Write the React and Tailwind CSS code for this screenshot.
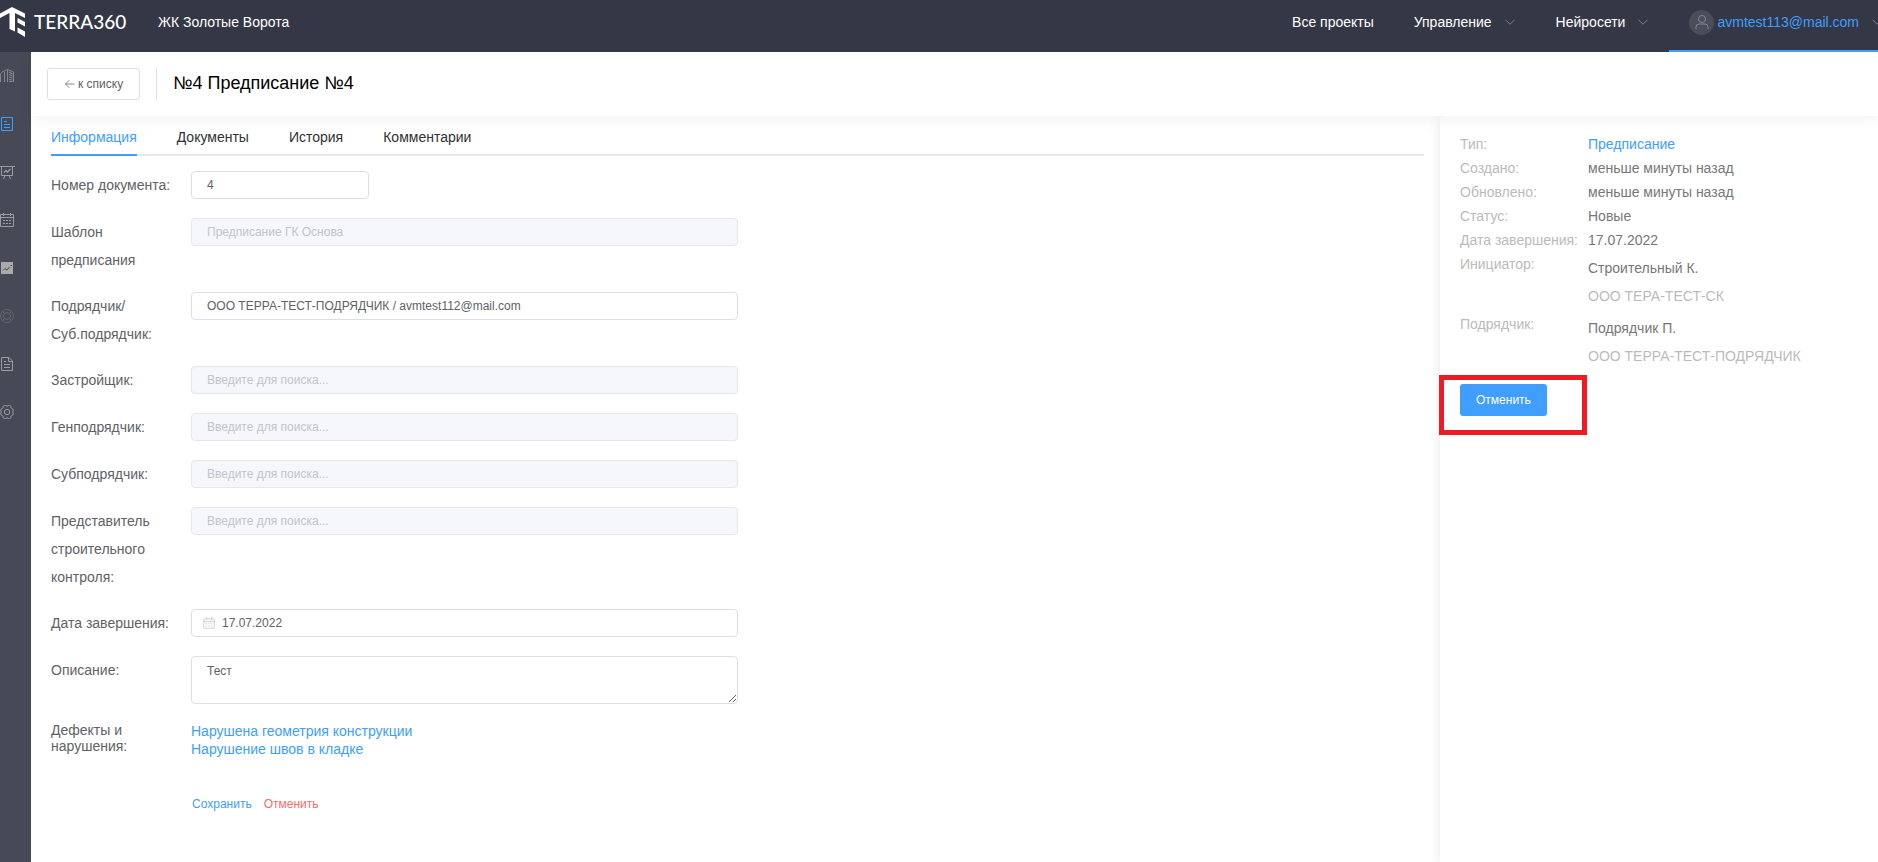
import clsx from "clsx";

const menu = [
  { title: "Объект", tone: "text-[#85878e]", Icon: BuildingIcon },
  { title: "Предписания", tone: "text-[#409eff]", Icon: TicketsIcon },
  { title: "Доска", tone: "text-[#9c9da2]", Icon: BoardIcon },
  { title: "Календарь", tone: "text-[#9c9da2]", Icon: DateIcon },
  { title: "Аналитика", tone: "text-[#aaaaaa]", Icon: MarketingIcon },
  { title: "Помощь", tone: "text-[#666872]", Icon: HelpIcon },
  { title: "Документы", tone: "text-[#9c9da2]", Icon: DocumentIcon },
  { title: "Настройки", tone: "text-[#9c9da2]", Icon: SettingIcon },
];

const tabs = ["Информация", "Документы", "История", "Комментарии"];

const details = [
  { label: "Тип:", value: "Предписание", link: true },
  { label: "Создано:", value: "меньше минуты назад" },
  { label: "Обновлено:", value: "меньше минуты назад" },
  { label: "Статус:", value: "Новые" },
  { label: "Дата завершения:", value: "17.07.2022" },
];

const people = [
  { label: "Инициатор:", name: "Строительный К.", company: "ООО ТЕРА-ТЕСТ-СК" },
  { label: "Подрядчик:", name: "Подрядчик П.", company: "ООО ТЕРРА-ТЕСТ-ПОДРЯДЧИК" },
];

function Svg({ className = "size-4", children }) {
  return (
    <svg className={className} viewBox="0 0 16 16" fill="none" stroke="currentColor" aria-hidden="true">
      {children}
    </svg>
  );
}

function BuildingIcon() {
  return (
    <Svg>
      <path d="M.5 14V5.500L2.500 4M4.500 14V4M2 4l5.500-2.500L13.500 4v10M7.500 1.500V14" />
      <path d="M9 4l3.500 2M9 6.500l3.500 1.500M9 9l3.500 1M9 11.500l3.500.5M9 13.500h3.500" strokeWidth="1.200" />
    </Svg>
  );
}

function TicketsIcon() {
  return (
    <Svg>
      <path d="M1.500 1.500h11v13h-11zM4 5.500h3M4 8.500h6M4 11.500h6" />
    </Svg>
  );
}

function BoardIcon() {
  return (
    <Svg>
      <path d="M0 2.500h15M1.500 2.500v9h11v-9M5 11.500L3.500 15M9 11.500l1.500 3.500" />
      <path d="M4 8.500l2-2L7.500 8l3-3" strokeWidth="1.300" />
    </Svg>
  );
}

function DateIcon() {
  return (
    <Svg>
      <path d="M.5 2.500h13v12H.5zM.5 5.500h13M3.500 1v3M10.500 1v3" />
      <path d="M3 8.500h9M3 11.500h9" strokeDasharray="2 1" />
    </Svg>
  );
}

function MarketingIcon() {
  return (
    <Svg>
      <path d="M1 2h12v12H1z" fill="currentColor" stroke="none" />
      <path d="M3 10.500l2-2L7 10l2.500-3M10.500 5.500h1.500" className="stroke-[#474a56]" />
    </Svg>
  );
}

function HelpIcon() {
  return (
    <Svg>
      <circle cx="7" cy="8" r="6.500" />
      <circle cx="7" cy="8" r="3.500" />
      <path d="M2.500 3.500l2 2M11.500 3.500l-2 2M2.500 12.500l2-2M11.500 12.500l-2-2" />
    </Svg>
  );
}

function DocumentIcon() {
  return (
    <Svg>
      <path d="M1.500 1.500H9L12.500 5v9.500h-11zM8.500 1.500v4h4M4 5.500h2M4 8.500h6M4 11.500h6" />
    </Svg>
  );
}

function SettingIcon() {
  return (
    <Svg>
      <path
        d="M4.500 1.500h1.200l1.300.8 1.300-.8h1.200l1.300.8.2 1.500 1.500.9.800 1.300-.6 2 .6 2-.8 1.300-1.500.9-.2 1.500-1.300.8H8.300L7 13.700l-1.300.8H4.500l-1.300-.8-.2-1.500-1.500-.9-.8-1.300.6-2-.6-2 .8-1.300L3 3.800l.2-1.500z"
        strokeLinejoin="round"
      />
      <circle cx="7" cy="8" r="2.700" />
    </Svg>
  );
}

function ChevronDown() {
  return (
    <Svg className="ml-3 size-3 shrink-0 text-[#909399]">
      <path d="M2 5l6 6 6-6" />
    </Svg>
  );
}

function Logo() {
  return (
    <a href="#" className="flex w-[127px] items-center gap-2 text-white">
      <svg className="h-[31px] w-[26px] shrink-0" viewBox="0 0 26 31" fill="currentColor" aria-hidden="true">
        <path d="M12 0l13 6.500V11L15 6v18.500L9.500 22V6L0 11V6.500z" />
        <path d="M17.500 11l7.500 4v4.500l-7.500-4zM17.500 20.500l7.500 4V30l-7.500-4.500z" />
      </svg>
      <span className="font-[Lato,sans-serif] text-[19px] leading-5 font-medium">TERRA360</span>
    </a>
  );
}

function Header() {
  return (
    <header className="relative z-20 flex h-[52px] overflow-hidden bg-[#343745] text-sm text-white">
      <div className="flex h-11 flex-1 items-center gap-[31px]">
        <Logo />
        <a href="#" className="whitespace-nowrap">ЖК Золотые Ворота</a>
      </div>
      <nav className="-mr-[25px] flex whitespace-nowrap">
        <a href="#" className="flex items-center px-5 pt-1 pb-3">Все проекты</a>
        <button className="flex items-center px-5 pt-1 pb-3">
          Управление
          <ChevronDown />
        </button>
        <button className="flex items-center px-5 pt-1 pb-3">
          Нейросети
          <ChevronDown />
        </button>
        <button className="flex items-center border-b-2 border-[#409eff] px-5 pt-1 pb-2.5 text-[#409eff]">
          <span className="mr-[3px] flex size-[25px] items-center justify-center rounded-full bg-[#4a4d5a] text-[#85878e]">
            <Svg>
              <circle cx="8" cy="5" r="3.500" />
              <path d="M2 15v-2a3 3 0 013-3h6a3 3 0 013 3v2" />
            </Svg>
          </span>
          avmtest113@mail.com
          <ChevronDown />
        </button>
      </nav>
    </header>
  );
}

function Sidebar() {
  return (
    <aside className="w-[31px] shrink-0 bg-[#474a56]">
      {menu.map(({ title, tone, Icon }) => (
        <a key={title} href="#" aria-label={title} className={clsx("flex h-12 items-center", tone)}>
          <Icon />
        </a>
      ))}
    </aside>
  );
}

function Row({ id, label, tight, children }) {
  return (
    <div className="flex min-h-[29px] items-start">
      <label htmlFor={id} className={clsx("w-[140px] shrink-0 pr-3", tight ? "leading-4" : "leading-7")}>
        {label}
      </label>
      <div className="min-w-0 flex-1">{children}</div>
    </div>
  );
}

function TextInput({ className = "w-full px-[15px]", ...props }) {
  return (
    <input
      className={clsx(
        "block h-7 rounded border border-[#dcdfe6] bg-white text-xs text-[#606266] outline-none placeholder:text-[#c0c4cc] disabled:border-[#e4e7ed] disabled:bg-[#f5f7fa] disabled:text-[#c0c4cc]",
        className
      )}
      {...props}
    />
  );
}

function InfoForm() {
  return (
    <form className="mt-[15px] flex w-1/2 flex-col gap-[18px] text-sm text-[#606266]">
      <Row id="number" label="Номер документа:">
        <TextInput id="number" defaultValue="4" className="w-[178px] px-[15px]" />
      </Row>
      <Row id="template" label="Шаблон предписания">
        <TextInput id="template" defaultValue="Предписание ГК Основа" disabled />
      </Row>
      <Row id="contractor" label="Подрядчик/ Суб.подрядчик:">
        <TextInput id="contractor" defaultValue="ООО ТЕРРА-ТЕСТ-ПОДРЯДЧИК / avmtest112@mail.com" />
      </Row>
      <Row id="developer" label="Застройщик:">
        <TextInput id="developer" placeholder="Введите для поиска..." disabled />
      </Row>
      <Row id="general" label="Генподрядчик:">
        <TextInput id="general" placeholder="Введите для поиска..." disabled />
      </Row>
      <Row id="sub" label="Субподрядчик:">
        <TextInput id="sub" placeholder="Введите для поиска..." disabled />
      </Row>
      <Row id="control" label="Представитель строительного контроля:">
        <TextInput id="control" placeholder="Введите для поиска..." disabled />
      </Row>
      <Row id="date" label="Дата завершения:">
        <div className="relative">
          <TextInput id="date" defaultValue="17.07.2022" className="w-full pr-[15px] pl-[30px]" />
          <Svg className="absolute top-2 left-3 size-3 text-[#c0c4cc]">
            <path d="M1 2.500h14V15H1zM1 6h14M4.500 0v4M11.500 0v4" />
            <path d="M3.500 9h9M3.500 12h9" strokeDasharray="2 1.500" />
          </Svg>
        </div>
      </Row>
      <Row id="description" label="Описание:">
        <textarea
          id="description"
          defaultValue="Тест"
          className="block h-12 w-full resize rounded border border-[#dcdfe6] px-[15px] py-[5px] text-xs leading-[18px] outline-none"
        />
      </Row>
      <Row label="Дефекты и нарушения:" tight>
        <ul className="leading-[18px] text-[#409eff]">
          <li><a href="#">Нарушена геометрия конструкции</a></li>
          <li><a href="#">Нарушение швов в кладке</a></li>
        </ul>
      </Row>
      <div className="mt-4 ml-[141px] flex gap-3 text-xs leading-6">
        <button type="button" className="text-[#409eff]">Сохранить</button>
        <button type="button" className="text-[#f56c6c]">Отменить</button>
      </div>
    </form>
  );
}

function Details() {
  return (
    <aside className="w-[438px] shrink-0 rounded-tl bg-white px-5 pt-4 text-sm shadow-[0_2px_12px_rgba(0,0,0,0.1)]">
      <dl className="grid grid-cols-[128px_1fr] leading-6 text-[#777777]">
        {details.map(({ label, value, link }) => (
          <div key={label} className="contents">
            <dt className="text-[#bbbbbb]">{label}</dt>
            <dd>{link ? <a href="#" className="text-[#409eff]">{value}</a> : value}</dd>
          </div>
        ))}
        {people.map(({ label, name, company }) => (
          <div key={label} className="contents">
            <dt className="text-[#bbbbbb]">{label}</dt>
            <dd className="py-0.5 leading-7">
              {name}
              <span className="block text-[#bbbbbb]">{company}</span>
            </dd>
          </div>
        ))}
      </dl>
      <div className="relative mt-3 w-fit">
        <button className="h-8 rounded-[3px] bg-[#409eff] px-4 text-xs font-medium text-white">Отменить</button>
        <div className="pointer-events-none absolute -top-[9px] -left-[21px] h-[60px] w-[148px] border-5 border-[#ed1c24]" />
      </div>
    </aside>
  );
}

export default function App() {
  return (
    <div className="flex min-h-screen flex-col overflow-hidden bg-white font-['Liberation_Sans',Arial,sans-serif]">
      <Header />
      <div className="flex flex-1">
        <Sidebar />
        <div className="flex min-w-0 flex-1 flex-col">
          <div className="relative z-10 flex h-16 items-center gap-4 bg-white px-4 shadow-[0_2px_16px_rgba(0,0,0,0.06)]">
            <button className="flex h-8 items-center gap-0.5 rounded-[3px] border border-[#dcdfe6] px-4 text-xs text-[#606266]">
              <Svg className="size-3">
                <path d="M14 8H2M7 3L2 8l5 5" />
              </Svg>
              к списку
            </button>
            <div className="h-8 w-px bg-[#dcdfe6]" />
            <h1 className="pb-0.5 text-lg leading-6 text-black">№4 Предписание №4</h1>
          </div>
          <div className="flex flex-1">
            <main className="min-w-0 flex-1 pr-4 pl-5">
              <div role="tablist" className="flex h-10 gap-10 border-b-2 border-[#e4e7ed] text-sm text-[#303133]">
                {tabs.map((tab, i) => (
                  <button
                    key={tab}
                    role="tab"
                    aria-selected={i === 0}
                    className={clsx("-mb-0.5 border-b-2 pt-1", i === 0 ? "border-[#409eff] text-[#409eff]" : "border-transparent")}
                  >
                    {tab}
                  </button>
                ))}
              </div>
              <InfoForm />
            </main>
            <Details />
          </div>
        </div>
      </div>
    </div>
  );
}
